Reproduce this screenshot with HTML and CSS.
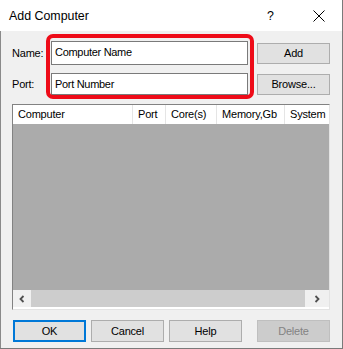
FILE: index.html
```html
<!DOCTYPE html>
<html lang="en">
<head>
    <meta charset="UTF-8">
    <title>Add Computer</title>
    <link rel="stylesheet" href="styles.css">
</head>
<body>
    <div class="window">
        <div class="titlebar">
            <span class="title">Add Computer</span>
            <span class="help-btn">?</span>
            <span class="close-btn">
                <svg width="12" height="12" viewBox="0 0 12 12"><path d="M0.5 0.5 L11.5 11.5 M11.5 0.5 L0.5 11.5" stroke="#000" stroke-width="1" fill="none"/></svg>
            </span>
        </div>

        <div class="content">
            <div class="top-rows">
                <div class="row row-name">
                    <label class="lbl">Name:</label>
                    <div class="field">Computer Name</div>
                    <button class="btn">Add</button>
                </div>
                <div class="row row-port">
                    <label class="lbl">Port:</label>
                    <div class="field">Port Number</div>
                    <button class="btn">Browse...</button>
                </div>
                <div class="highlight"></div>
            </div>

            <div class="list">
                <div class="list-head">
                    <div class="col col-computer">Computer</div>
                    <div class="col col-port">Port</div>
                    <div class="col col-cores">Core(s)</div>
                    <div class="col col-mem">Memory,Gb</div>
                    <div class="col col-sys">System</div>
                </div>
                <div class="list-body"></div>
                <div class="hscroll">
                    <span class="arrow">
                        <svg width="8" height="8" viewBox="0 0 8 8"><path d="M5.5 1 L2.5 4 L5.5 7" stroke="#505050" stroke-width="1.8" fill="none"/></svg>
                    </span>
                    <div class="thumb"></div>
                    <span class="arrow">
                        <svg width="8" height="8" viewBox="0 0 8 8"><path d="M2.5 1 L5.5 4 L2.5 7" stroke="#505050" stroke-width="1.8" fill="none"/></svg>
                    </span>
                </div>
            </div>

            <div class="buttons">
                <button class="btn btn-ok">OK</button>
                <button class="btn">Cancel</button>
                <button class="btn">Help</button>
                <button class="btn btn-disabled">Delete</button>
            </div>
        </div>
    </div>
</body>
</html>
```

FILE: styles.css
```css
body {
    margin: 0;
    padding: 0;
    background-color: #ffffff;
    font-family: "Liberation Sans", Arial, sans-serif;
    font-size: 11px;
    color: #000;
}
.window {
    width: 343px;
    height: 349px;
    box-sizing: border-box;
    border-right: 1px solid #7a7a7a;
    border-bottom: 1px solid #7a7a7a;
    background-color: #f0f0f0;
    display: flex;
    flex-direction: column;
}
.titlebar {
    height: 31px;
    background-color: #fff;
    display: flex;
    align-items: center;
    flex-shrink: 0;
}
.title {
    margin-left: 9px;
    font-size: 12.4px;
    flex: 1;
}
.help-btn {
    font-size: 12.4px;
    width: 12px;
    margin-right: 34px;
}
.close-btn {
    width: 12px;
    height: 12px;
    margin-right: 17px;
    display: flex;
}
.content {
    flex: 1;
    border-left: 1px solid #8a8a8a;
    padding: 0 11px 0 11px;
}
.top-rows {
    position: relative;
    padding-top: 10px;
}
.row {
    display: flex;
    align-items: center;
}
.row-name {
    height: 24px;
}
.row-port {
    height: 22px;
    margin-top: 8px;
}
.lbl {
    width: 39px;
    letter-spacing: -0.2px;
}
.field {
    width: 197px;
    height: 100%;
    box-sizing: border-box;
    border: 1px solid #7a7a7a;
    background-color: #fff;
    padding: 3px 0 0 3px;
    letter-spacing: -0.3px;
    line-height: 14px;
}
.btn {
    font-family: "Liberation Sans", Arial, sans-serif;
    font-size: 11px;
    letter-spacing: -0.2px;
    width: 73px;
    height: 22px;
    box-sizing: border-box;
    background-color: #e1e1e1;
    border: 1px solid #adadad;
    padding: 0;
    color: #000;
}
.row .btn {
    margin-left: 9px;
    height: 21px;
}
.highlight {
    position: absolute;
    left: 34px;
    top: 3px;
    width: 208px;
    height: 65px;
    box-sizing: border-box;
    border: 4px solid #ee0b18;
    border-radius: 7px;
}
.list {
    margin-top: 9px;
    width: 318px;
    height: 206px;
    box-sizing: border-box;
    border: 1px solid #828282;
    border-right-color: #e3e3e3;
    border-bottom-color: #e3e3e3;
    display: flex;
    flex-direction: column;
    background-color: #fff;
}
.list-head {
    height: 19px;
    display: flex;
    background-color: #fff;
    overflow: hidden;
    flex-shrink: 0;
}
.col {
    box-sizing: border-box;
    padding-left: 5px;
    line-height: 19px;
    border-right: 1px solid #e5e5e5;
    white-space: nowrap;
    overflow: hidden;
    letter-spacing: -0.2px;
}
.col-computer { width: 120px; }
.col-port { width: 33px; }
.col-cores { width: 51px; }
.col-mem { width: 68px; }
.col-sys { width: 44px; border-right: none; }
.list-body {
    flex: 1;
    background-color: #ababab;
}
.hscroll {
    height: 17px;
    margin-bottom: 2px;
    display: flex;
    align-items: stretch;
    background-color: #f0f0f0;
    flex-shrink: 0;
}
.arrow {
    width: 18px;
    display: flex;
    align-items: center;
    justify-content: center;
}
.hscroll .arrow:last-child {
    width: 24px;
}
.thumb {
    flex: 1;
    background-color: #cdcdcd;
}
.buttons {
    display: flex;
    margin-top: 10px;
    padding-left: 1px;
}
.buttons .btn {
    margin-right: 5px;
}
.btn-ok {
    border: 2px solid #0078d7;
}
.buttons .btn-disabled {
    margin-left: 10px;
    margin-right: 0;
    background-color: #cccccc;
    border-color: #bfbfbf;
    color: #838383;
}
```
